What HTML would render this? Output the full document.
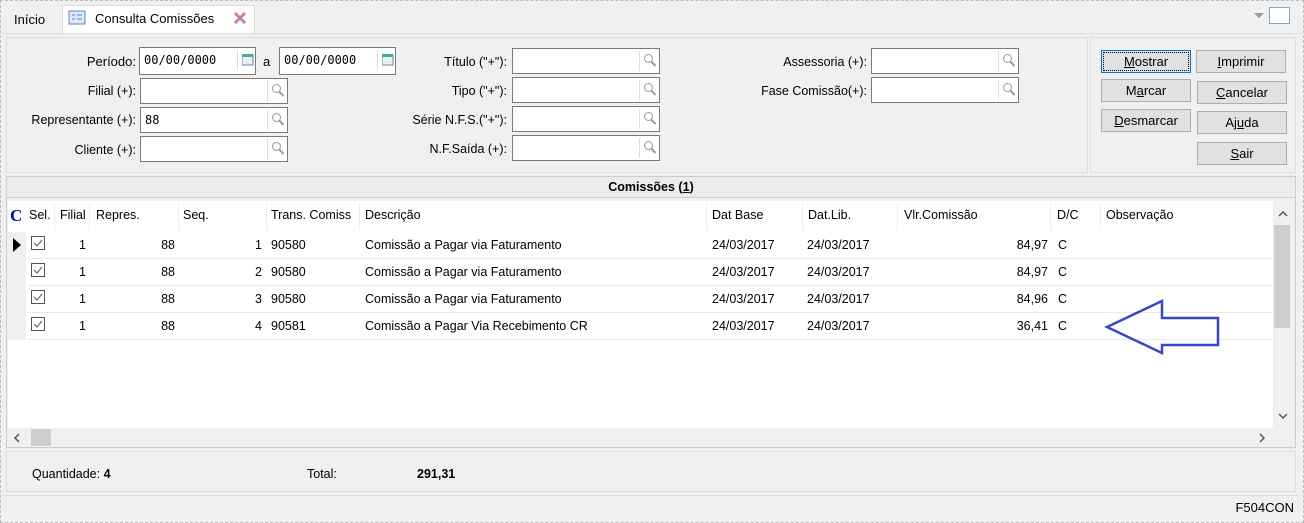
<!DOCTYPE html>
<html><head><meta charset="utf-8"><style>
*{box-sizing:border-box;margin:0;padding:0}
body{width:1304px;height:523px;background:#f0f0f0;font-family:"Liberation Sans",sans-serif;font-size:12.5px;color:#000;position:relative;overflow:hidden}
.a{position:absolute;white-space:nowrap}
.lbl{position:absolute;text-align:right;white-space:nowrap;font-size:12.5px}
.inp{position:absolute;background:#fff;border:1px solid #7a7a7a;height:26px;padding:5px 4px;font-size:12.5px}
.inp .ic{position:absolute;right:0;top:2px;width:20px;height:20px;border-left:1px solid #ddd}
.inp .ic.s::after{content:"";position:absolute;left:4px;top:3px;width:7px;height:7px;border:1px solid #999;border-radius:50%}
.inp .ic.s::before{content:"";position:absolute;left:12px;top:10px;width:6px;height:1.5px;background:#999;transform:rotate(45deg);transform-origin:0 0}
.btn{position:absolute;background:#e1e1e1;border:1px solid #adadad;height:23px;text-align:center;line-height:21px;font-size:13px}
.hd{position:absolute;top:208px;font-size:12.5px}
.row{position:absolute;left:28px;width:1244px;height:27px;border-bottom:1px solid #eaeaea}
.c{position:absolute;top:6px;white-space:nowrap}
.r{text-align:right}
.cb{position:absolute;left:3px;top:4px;width:14px;height:14px;border:1px solid #555;background:#fff}
</style></head><body>
<div class="a" style="left:0;top:0;width:1304px;height:523px;border:1px dashed #bbb"></div>
<div class="a" style="left:14px;top:12px;font-size:13px">Início</div>
<div class="a" style="left:62px;top:5px;width:193px;height:29px;background:#fff;border:1px solid #ddd;border-bottom:none"></div>
<svg class="a" style="left:68px;top:10px" width="18" height="16"><rect x="1" y="1" width="16" height="13" fill="#dbe8f7" stroke="#5a8ac6"/><line x1="4" y1="5" x2="7" y2="5" stroke="#5a8ac6"/><line x1="9" y1="5" x2="14" y2="5" stroke="#5a8ac6"/><line x1="4" y1="9" x2="7" y2="9" stroke="#5a8ac6"/><line x1="9" y1="9" x2="14" y2="9" stroke="#5a8ac6"/></svg>
<div class="a" style="left:95px;top:11px;font-size:13px">Consulta Comissões</div>
<svg class="a" style="left:233px;top:11px" width="14" height="14"><path d="M2 2L12 12M12 2L2 12" stroke="#c080b0" stroke-width="3"/></svg>
<svg class="a" style="left:1254px;top:13px" width="10" height="6"><path d="M0 0L10 0L5 5Z" fill="#999"/></svg>
<div class="a" style="left:1269px;top:7px;width:21px;height:17px;border:1px solid #7aa7d6;background:#fff"></div>
<div class="a" style="left:2px;top:33px;width:1300px;height:1px;background:#ddd"></div>
<div class="a" style="left:6px;top:37px;width:1082px;height:136px;border:1px solid #ddd"></div>
<div class="a" style="left:1090px;top:37px;width:206px;height:136px;border:1px solid #ddd"></div>
<div class="lbl" style="right:1168px;top:54px;font-size:13px">Período:</div>
<div class="inp" style="left:139px;top:47px;width:117px;height:28px;font-family:'DejaVu Sans Mono',monospace;font-size:12px">00/00/0000<span class="ic" style="width:18px"><svg width="12" height="12" style="margin:4px 0 0 4px"><rect x="0" y="0" width="11" height="11" fill="#e8f0f4" stroke="#68a"/><rect x="0" y="0" width="11" height="3" fill="#4a9"/></svg></span></div>
<div class="a" style="left:263px;top:54px;font-size:13px">a</div>
<div class="inp" style="left:279px;top:47px;width:117px;height:28px;font-family:'DejaVu Sans Mono',monospace;font-size:12px">00/00/0000<span class="ic" style="width:18px"><svg width="12" height="12" style="margin:4px 0 0 4px"><rect x="0" y="0" width="11" height="11" fill="#e8f0f4" stroke="#68a"/><rect x="0" y="0" width="11" height="3" fill="#4a9"/></svg></span></div>

<div class="lbl" style="right:1168px;top:84px">Filial (+):</div>
<div class="lbl" style="right:1168px;top:113px">Representante (+):</div>
<div class="lbl" style="right:1168px;top:143px">Cliente (+):</div>
<div class="inp" style="left:140px;top:78px;width:148px"><span class="ic s"></span></div>
<div class="inp" style="left:140px;top:107px;width:148px;font-family:'DejaVu Sans Mono',monospace;font-size:12px">88<span class="ic s"></span></div>
<div class="inp" style="left:140px;top:136px;width:148px"><span class="ic s"></span></div>

<div class="lbl" style="right:797px;top:55px">Título ("+"):</div>
<div class="lbl" style="right:797px;top:84px">Tipo ("+"):</div>
<div class="lbl" style="right:797px;top:113px">Série N.F.S.("+"):</div>
<div class="lbl" style="right:797px;top:142px">N.F.Saída (+):</div>
<div class="inp" style="left:512px;top:48px;width:148px"><span class="ic s"></span></div>
<div class="inp" style="left:512px;top:77px;width:148px"><span class="ic s"></span></div>
<div class="inp" style="left:512px;top:106px;width:148px"><span class="ic s"></span></div>
<div class="inp" style="left:512px;top:135px;width:148px"><span class="ic s"></span></div>

<div class="lbl" style="right:437px;top:55px">Assessoria (+):</div>
<div class="lbl" style="right:437px;top:84px">Fase Comissão(+):</div>
<div class="inp" style="left:871px;top:48px;width:148px"><span class="ic s"></span></div>
<div class="inp" style="left:871px;top:77px;width:148px"><span class="ic s"></span></div>

<div class="btn" style="left:1101px;top:50px;width:90px;border:1px solid #0078d7;outline:1px dotted #000;outline-offset:-3px"><u>M</u>ostrar</div>
<div class="btn" style="left:1196px;top:50px;width:90px"><u>I</u>mprimir</div>
<div class="btn" style="left:1101px;top:79px;width:90px">M<u>a</u>rcar</div>
<div class="btn" style="left:1197px;top:81px;width:90px"><u>C</u>ancelar</div>
<div class="btn" style="left:1101px;top:109px;width:90px"><u>D</u>esmarcar</div>
<div class="btn" style="left:1197px;top:111px;width:90px">Aj<u>u</u>da</div>
<div class="btn" style="left:1197px;top:142px;width:90px"><u>S</u>air</div>

<div class="a" style="left:6px;top:176px;width:1290px;height:272px;border:1px solid #ccc"></div>
<div class="a" style="left:7px;top:177px;width:1288px;height:21px;background:#ececec;border-bottom:1px solid #ccc;text-align:center;font-weight:bold;font-size:12.5px;line-height:20px">Comissões (<u>1</u>)</div>
<div class="a" style="left:8px;top:201px;width:1265px;height:227px;background:#fff"></div>
<div class="a" style="left:8px;top:232px;width:18px;height:108px;background:#f0f0f0"></div>
<div class="a" style="left:10px;top:206px;color:#0000c0;font-family:'Liberation Serif',serif;font-size:17px;font-weight:bold">C</div>
<div class="hd" style="left:29px">Sel.</div>
<div class="hd" style="left:60px">Filial</div>
<div class="hd" style="left:96px">Repres.</div>
<div class="hd" style="left:183px">Seq.</div>
<div class="hd" style="left:271px">Trans. Comiss</div>
<div class="hd" style="left:365px">Descrição</div>
<div class="hd" style="left:712px">Dat Base</div>
<div class="hd" style="left:808px">Dat.Lib.</div>
<div class="hd" style="left:904px">Vlr.Comissão</div>
<div class="hd" style="left:1057px">D/C</div>
<div class="hd" style="left:1106px">Observação</div>
<div class="a" style="left:54px;top:204px;width:1px;height:26px;background:#eee"></div>
<div class="a" style="left:89px;top:204px;width:1px;height:26px;background:#eee"></div>
<div class="a" style="left:178px;top:204px;width:1px;height:26px;background:#eee"></div>
<div class="a" style="left:266px;top:204px;width:1px;height:26px;background:#eee"></div>
<div class="a" style="left:359px;top:204px;width:1px;height:26px;background:#eee"></div>
<div class="a" style="left:706px;top:204px;width:1px;height:26px;background:#eee"></div>
<div class="a" style="left:802px;top:204px;width:1px;height:26px;background:#eee"></div>
<div class="a" style="left:897px;top:204px;width:1px;height:26px;background:#eee"></div>
<div class="a" style="left:1050px;top:204px;width:1px;height:26px;background:#eee"></div>
<div class="a" style="left:1100px;top:204px;width:1px;height:26px;background:#eee"></div>
<svg class="a" style="left:13px;top:238px" width="8" height="14"><path d="M0 0L8 7L0 14Z" fill="#000"/></svg>

<div class="row" style="top:232px"><div class="cb"><svg width="12" height="12"><path d="M2 6L5 9L10 3" stroke="#555" fill="none"/></svg></div><div class="c r" style="left:40px;width:18px">1</div><div class="c r" style="left:100px;width:47px">88</div><div class="c r" style="left:200px;width:34px">1</div><div class="c" style="left:243px">90580</div><div class="c" style="left:337px">Comissão a Pagar via Faturamento</div><div class="c" style="left:684px">24/03/2017</div><div class="c" style="left:779px">24/03/2017</div><div class="c r" style="left:900px;width:120px">84,97</div><div class="c" style="left:1030px">C</div></div>
<div class="row" style="top:259px"><div class="cb"><svg width="12" height="12"><path d="M2 6L5 9L10 3" stroke="#555" fill="none"/></svg></div><div class="c r" style="left:40px;width:18px">1</div><div class="c r" style="left:100px;width:47px">88</div><div class="c r" style="left:200px;width:34px">2</div><div class="c" style="left:243px">90580</div><div class="c" style="left:337px">Comissão a Pagar via Faturamento</div><div class="c" style="left:684px">24/03/2017</div><div class="c" style="left:779px">24/03/2017</div><div class="c r" style="left:900px;width:120px">84,97</div><div class="c" style="left:1030px">C</div></div>
<div class="row" style="top:286px"><div class="cb"><svg width="12" height="12"><path d="M2 6L5 9L10 3" stroke="#555" fill="none"/></svg></div><div class="c r" style="left:40px;width:18px">1</div><div class="c r" style="left:100px;width:47px">88</div><div class="c r" style="left:200px;width:34px">3</div><div class="c" style="left:243px">90580</div><div class="c" style="left:337px">Comissão a Pagar via Faturamento</div><div class="c" style="left:684px">24/03/2017</div><div class="c" style="left:779px">24/03/2017</div><div class="c r" style="left:900px;width:120px">84,96</div><div class="c" style="left:1030px">C</div></div>
<div class="row" style="top:313px"><div class="cb"><svg width="12" height="12"><path d="M2 6L5 9L10 3" stroke="#555" fill="none"/></svg></div><div class="c r" style="left:40px;width:18px">1</div><div class="c r" style="left:100px;width:47px">88</div><div class="c r" style="left:200px;width:34px">4</div><div class="c" style="left:243px">90581</div><div class="c" style="left:337px">Comissão a Pagar Via Recebimento CR</div><div class="c" style="left:684px">24/03/2017</div><div class="c" style="left:779px">24/03/2017</div><div class="c r" style="left:900px;width:120px">36,41</div><div class="c" style="left:1030px">C</div></div>

<svg class="a" style="left:1100px;top:295px" width="125" height="62"><path d="M7 32L62 6L62 23L118 23L118 50L62 50L62 58Z" fill="none" stroke="#3a48c0" stroke-width="2.5" stroke-linejoin="miter"/></svg>

<div class="a" style="left:1273px;top:201px;width:18px;height:227px;background:#f0f0f0"></div>
<div class="a" style="left:1274px;top:225px;width:16px;height:103px;background:#cdcdcd"></div>
<svg class="a" style="left:1278px;top:210px" width="10" height="8"><path d="M1 6L5 2L9 6" stroke="#555" fill="none" stroke-width="1.5"/></svg>
<svg class="a" style="left:1278px;top:412px" width="10" height="8"><path d="M1 2L5 6L9 2" stroke="#555" fill="none" stroke-width="1.5"/></svg>
<div class="a" style="left:8px;top:428px;width:1283px;height:18px;background:#f0f0f0"></div>
<div class="a" style="left:31px;top:429px;width:20px;height:17px;background:#cdcdcd"></div>
<svg class="a" style="left:13px;top:433px" width="8" height="10"><path d="M6 1L2 5L6 9" stroke="#555" fill="none" stroke-width="1.5"/></svg>
<svg class="a" style="left:1258px;top:433px" width="8" height="10"><path d="M2 1L6 5L2 9" stroke="#555" fill="none" stroke-width="1.5"/></svg>

<div class="a" style="left:6px;top:451px;width:1290px;height:41px;border:1px solid #ddd"></div>
<div class="a" style="left:32px;top:467px;font-size:12.5px">Quantidade: <b>4</b></div>
<div class="a" style="left:307px;top:467px;font-size:12.5px">Total:</div>
<div class="a" style="left:417px;top:467px;font-size:12.5px;font-weight:bold">291,31</div>
<div class="a" style="left:2px;top:495px;width:1296px;height:1px;background:#ddd"></div>
<div class="a" style="right:10px;top:500px;font-size:13px">F504CON</div>
</body></html>
